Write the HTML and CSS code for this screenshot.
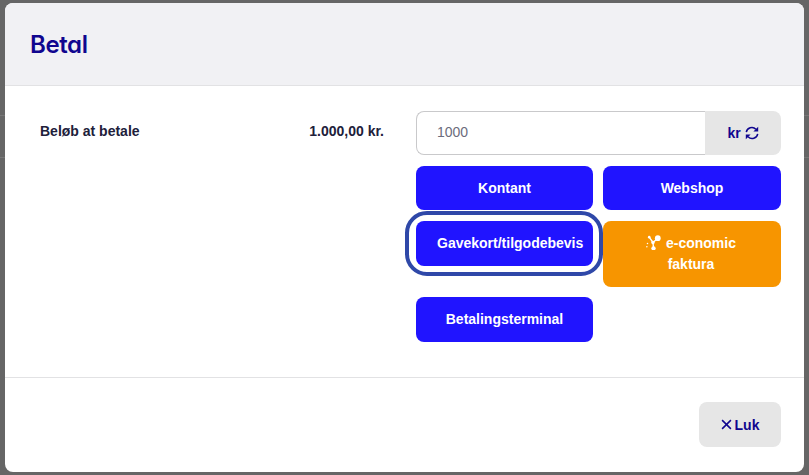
FILE: index.html
```html
<!DOCTYPE html>
<html lang="da">
<head>
<meta charset="utf-8">
<title>Betal</title>
<link rel="stylesheet" href="styles.css">
</head>
<body>
<div class="modal">
  <header class="modal-header"><h1 class="title">Betal</h1></header>
  <main class="modal-body">
    <div class="summary">
      <span class="label">Beløb at betale</span>
      <span class="amount">1.000,00 kr.</span>
    </div>
    <div class="pay">
      <div class="input-group">
        <input class="input" type="text" placeholder="1000">
        <button class="addon" type="button">kr
          <svg class="sync" viewBox="0 0 14 14" aria-hidden="true">
            <path class="sync-arc" d="M1.3 6.2A5.6 5.6 0 0 1 10.9 3.2M12.7 7.8A5.6 5.6 0 0 1 3.1 10.8"/>
            <path class="sync-head" d="M13.2 .8V5.6H8.4ZM.8 13.2V8.4H5.6Z"/>
          </svg>
        </button>
      </div>
      <div class="methods">
        <button class="btn" type="button">Kontant</button>
        <button class="btn" type="button">Webshop</button>
        <button class="btn btn-focus" type="button">Gavekort/tilgodebevis</button>
        <button class="btn btn-orange" type="button">
          <svg class="eco" viewBox="0 0 14 14" aria-hidden="true">
            <path class="eco-line" d="M3 2 6.5 7 11 3M6.5 7 7 12"/>
            <circle cx="11" cy="3" r="2.7"/>
            <circle cx="6.5" cy="7" r="1.6"/>
            <circle cx="7" cy="12.4" r="2"/>
            <circle cx="3" cy="2" r="1.2"/>
            <circle cx="1.4" cy="8" r=".7"/>
            <circle cx=".8" cy="11" r=".7"/>
          </svg>
          e-conomic<br>faktura
        </button>
        <button class="btn" type="button">Betalingsterminal</button>
      </div>
    </div>
  </main>
  <footer class="modal-footer">
    <button class="close" type="button">
      <svg class="x" viewBox="0 0 10 10" aria-hidden="true"><path d="M1 1 9 9M9 1 1 9"/></svg>
      Luk
    </button>
  </footer>
</div>
</body>
</html>
```
FILE: styles.css
```css
* { box-sizing: border-box; }

html, body { height: 100%; }

body {
  margin: 0;
  padding: 3px 5px;
  overflow: hidden;
  font-family: "Liberation Sans", sans-serif;
  background-color: #666;
  background-image:
    linear-gradient(#777, #777),
    linear-gradient(#777, #777);
  background-size: 100% 1px, 100% 1px;
  background-position: 0 115px, 0 157px;
  background-repeat: no-repeat;
}

.modal {
  display: flex;
  flex-direction: column;
  height: 469px;
  background: #fff;
  border-radius: 8px;
  overflow: hidden;
}

.modal-header {
  height: 83px;
  padding: 0 25px;
  display: flex;
  align-items: center;
  background: #f1f1f4;
  border-bottom: 1px solid #e2e2e4;
}

.title {
  margin: 0;
  font-family: Inter, "Liberation Sans", sans-serif;
  font-feature-settings: "cv11";
  font-size: 24px;
  font-weight: 600;
  color: #10068f;
  letter-spacing: -0.4px;
}

.modal-body {
  flex: 1;
  display: flex;
  align-items: flex-start;
  padding: 25px 23px 0 35px;
}

.summary {
  flex: none;
  width: 344px;
  height: 44px;
  padding-top: 10px;
  display: flex;
  justify-content: space-between;
  font-size: 14px;
  font-weight: 700;
  color: #20203a;
  line-height: 20px;
}

.pay { flex: none; width: 365px; margin-left: 32px; }

.input-group { display: flex; height: 44px; }

.input {
  flex: 1;
  min-width: 0;
  padding: 0 20px 2px;
  border: 1px solid #c9c9cb;
  border-right: 0;
  border-radius: 8px 0 0 8px;
  font: 14px "Liberation Sans", sans-serif;
  background: #fff;
  outline: none;
}

.input::placeholder { color: #6c6c7c; opacity: 1; }

.addon {
  width: 76px;
  border: 0;
  border-radius: 0 8px 8px 0;
  background: #e6e6e6;
  display: flex;
  align-items: center;
  justify-content: center;
  gap: 4px;
  font: 700 14px "Liberation Sans", sans-serif;
  color: #10068f;
}

.sync { width: 14px; height: 14px; }
.sync-arc { fill: none; stroke: #10068f; stroke-width: 1.5; }
.sync-head { fill: #10068f; }

.methods {
  display: grid;
  grid-template-columns: 177px 178px;
  column-gap: 10px;
  row-gap: 10px;
  align-items: start;
  margin-top: 11px;
}

.btn {
  min-height: 44px;
  padding: 8px 10px;
  border: 0;
  border-radius: 8px;
  background: #2014ff;
  color: #fff;
  font: 700 14px/21px "Liberation Sans", sans-serif;
  text-align: center;
  white-space: nowrap;
}

.btn:nth-child(1), .btn:nth-child(2) { margin-bottom: 1px; }

.btn-focus {
  min-height: 45px;
  padding: 0 11px 0 21px;
  position: relative;
}

.btn-focus::after {
  content: "";
  position: absolute;
  inset: -10px -10px -10px -11px;
  border: 4px solid #2f48a8;
  border-radius: 22px;
}

.btn-orange {
  min-height: 66px;
  background: #f79500;
  white-space: normal;
  padding: 12px 11px 12px 9px;
}

.eco { width: 15px; height: 15px; fill: #fff; vertical-align: -2px; margin-right: 1px; }
.eco-line { fill: none; stroke: #fff; stroke-width: 1.3; }

.btn:last-child { min-height: 45px; }

.modal-footer {
  height: 95px;
  flex: none;
  border-top: 1px solid #e2e2e4;
  display: flex;
  justify-content: flex-end;
  align-items: flex-start;
  padding: 24px 23px 0 0;
}

.close {
  width: 82px;
  height: 45px;
  border: 0;
  border-radius: 8px;
  background: #e6e6e6;
  color: #10068f;
  font: 700 14px "Liberation Sans", sans-serif;
  display: flex;
  align-items: center;
  justify-content: center;
  gap: 3px;
}

.x { width: 11px; height: 11px; fill: none; stroke: #10068f; stroke-width: 1.4; }
```
